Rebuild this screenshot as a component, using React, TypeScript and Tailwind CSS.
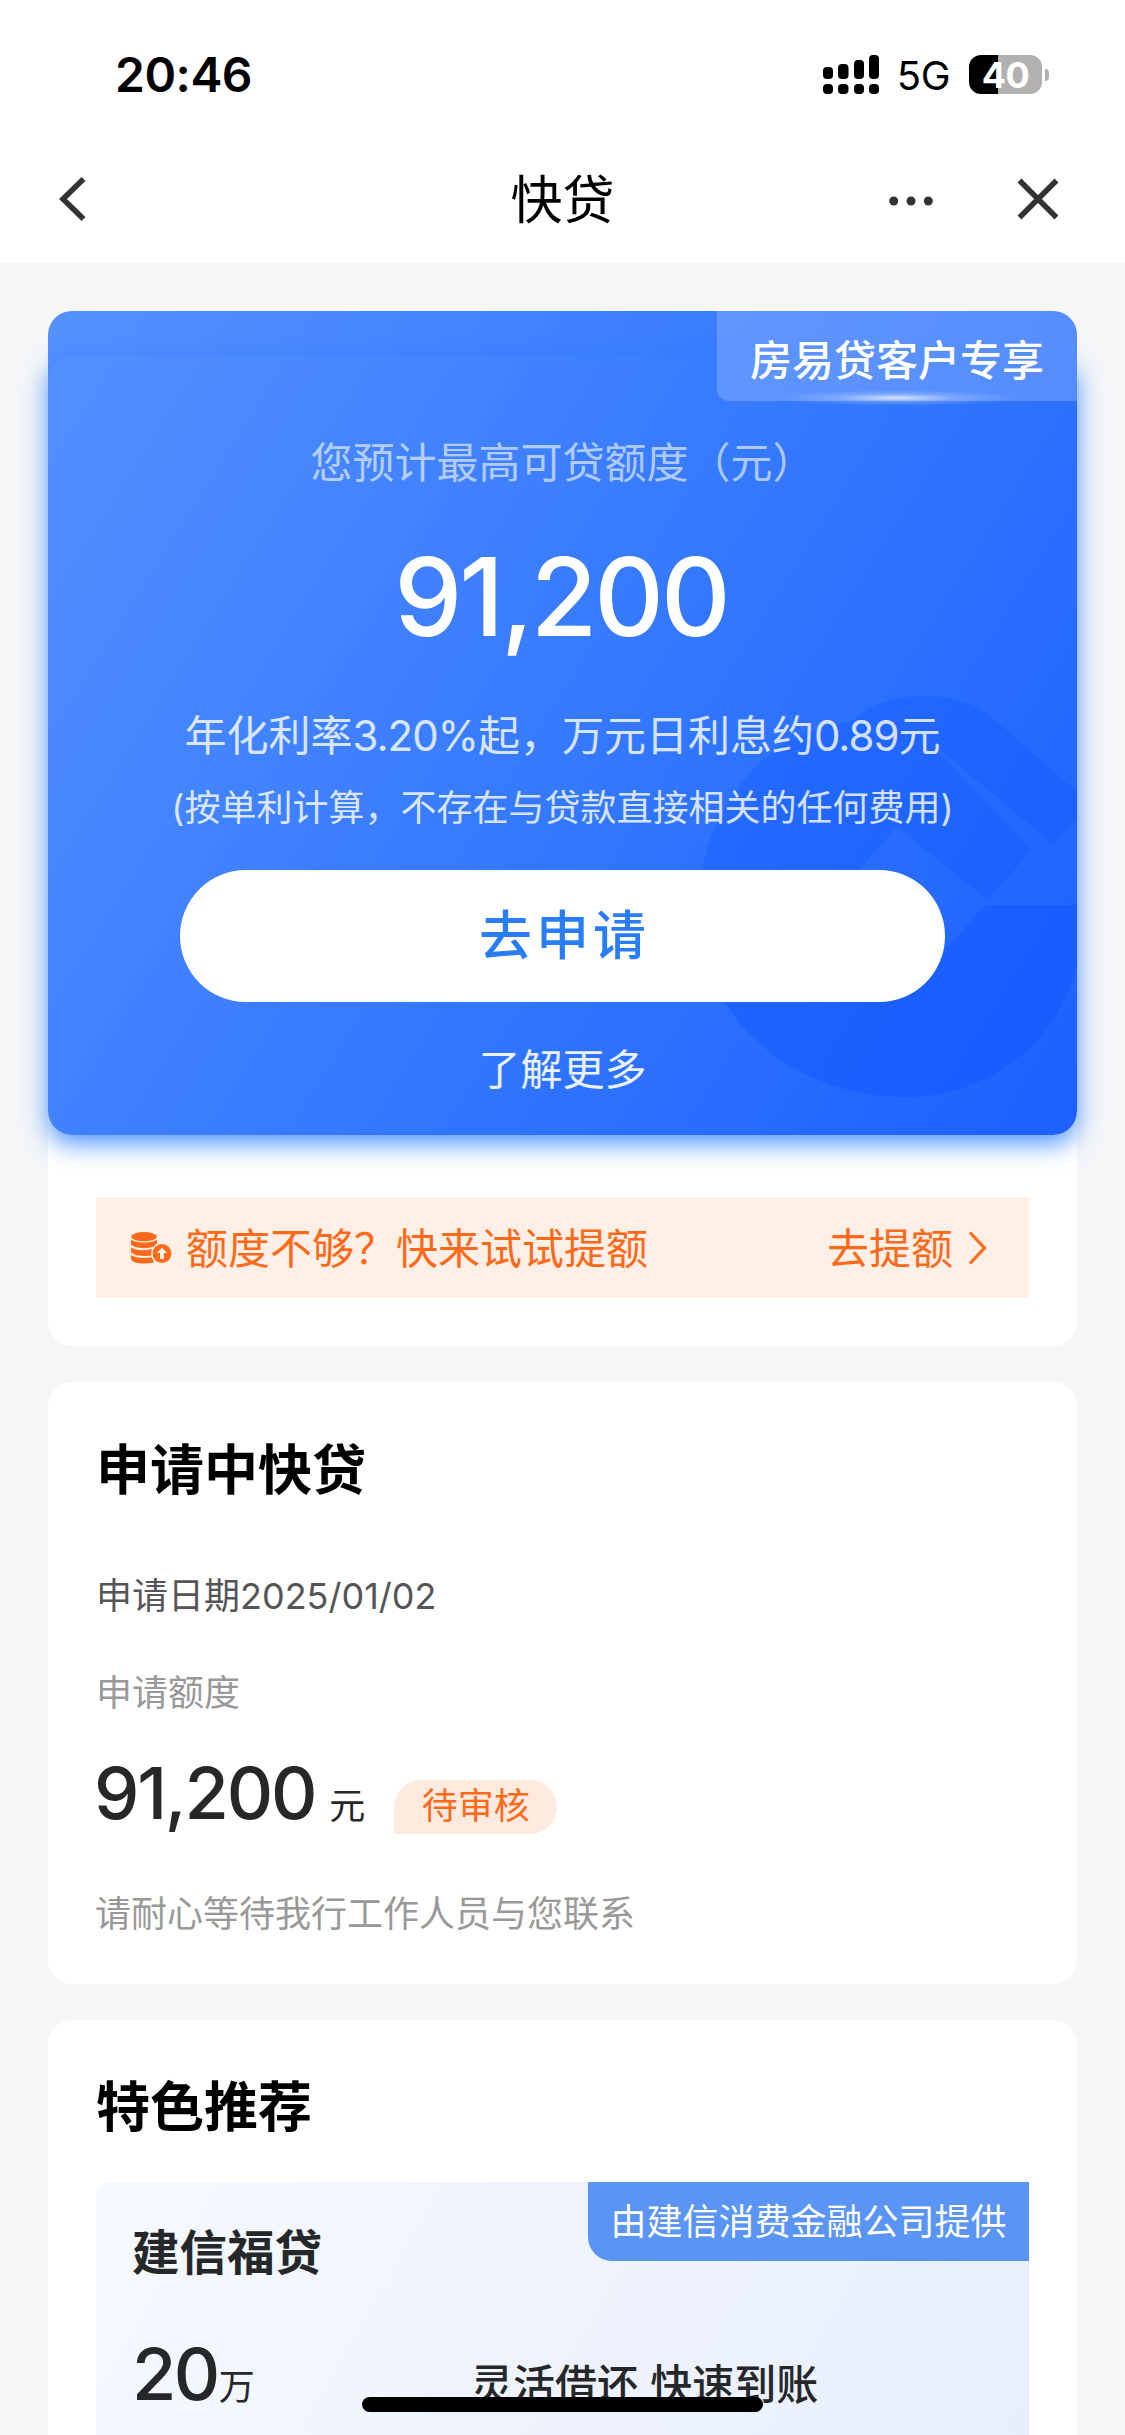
// 快贷 home page: status bar, nav bar, quota hero, pending application, recommendations

const FONT = "font-['Inter','Noto_Sans_CJK_SC',sans-serif]";

function SignalIcon() {
  return (
    <svg width="57" height="40" viewBox="0 0 57 40" className="shrink-0">
      <rect x="0" y="12" width="10" height="12" rx="4" />
      <rect x="15" y="9" width="10.5" height="15" rx="4" />
      <rect x="31" y="5" width="10" height="19" rx="4" />
      <rect x="46" y="0" width="10" height="24" rx="4" />
      <rect x="0" y="29" width="10" height="10" rx="4" />
      <rect x="15" y="29" width="10.5" height="10" rx="4" />
      <rect x="31" y="29" width="10" height="10" rx="4" />
      <rect x="46" y="29" width="10" height="10" rx="4" />
    </svg>
  );
}

function Battery() {
  return (
    <div className="flex items-center gap-[3px]">
      <div className="flex h-[39px] w-[73px] items-center justify-center rounded-[12px] bg-[linear-gradient(90deg,#000_40%,#b1b1b1_40%)] text-[36px] leading-none font-bold tracking-[-0.5px] text-white">
        40
      </div>
      <div className="h-3 w-1 rounded-r-full bg-[#b1b1b1]" />
    </div>
  );
}

function StatusBar() {
  return (
    <div className="flex h-[136px] items-start justify-between pr-[76px] pl-[115px]">
      <div className="mt-[46px] text-[48px] leading-[58px] font-semibold tracking-[-0.5px]">20:46</div>
      <div className="mt-[55px] flex h-[39px] items-center">
        <SignalIcon />
        <span className="mt-[2px] ml-[17px] text-[40px] leading-none tracking-[-0.5px]">5G</span>
        <span className="ml-[19px]">
          <Battery />
        </span>
      </div>
    </div>
  );
}

function NavBar() {
  return (
    <div className="grid h-[127px] grid-cols-[1fr_auto_1fr] items-start">
      <svg
        width="30"
        height="46"
        viewBox="0 0 30 46"
        fill="none"
        stroke="#333"
        strokeWidth="5.5"
        className="mt-[40px] ml-[57px]"
      >
        <path d="M26.5 3 L6 23 L26.5 43" />
      </svg>
      <h1 className="mt-[33px] text-[52px] leading-[64px]">快贷</h1>
      <div className="mt-[42px] mr-[66px] flex items-center justify-end">
        <svg width="44" height="10" viewBox="0 0 44 10" fill="#333" className="mt-[3px] mr-[84px]">
          <circle cx="4.7" cy="5" r="4.5" />
          <circle cx="22" cy="5" r="4.5" />
          <circle cx="39.3" cy="5" r="4.5" />
        </svg>
        <svg width="42" height="42" viewBox="0 0 42 42" fill="none" stroke="#333" strokeWidth="5.5">
          <path d="M2.5 2.5 L39.5 39.5 M39.5 2.5 L2.5 39.5" />
        </svg>
      </div>
    </div>
  );
}

// Faint bank emblem in the lower right of the hero
function Watermark() {
  return (
    <svg width="380" height="406" viewBox="697 694 380 406" className="absolute top-[383px] right-0">
      <g fill="#0850ff">
        <path
          d="M870 708 C905 690 955 692 988 714 L1077 792 V818 L1053 844 L950 758 C925 735 890 722 850 722 Z"
          opacity="0.26"
        />
        <path
          d="M850 722 C890 722 925 735 940 754 L1032 850 L987 900 L897 826 L812 925 H700 C688 840 750 730 850 722 Z"
          opacity="0.26"
        />
        <path
          d="M985 905 H1077 V960 C1062 1040 990 1097 905 1097 C825 1097 755 1055 724 1000 H900 Z"
          opacity="0.34"
        />
      </g>
    </svg>
  );
}

function CoinsIcon() {
  return (
    <svg width="41" height="32" viewBox="0 0 41 32" fill="#ff6a1a" className="shrink-0">
      <ellipse cx="13" cy="4.7" rx="12.8" ry="4.6" />
      <path d="M0 7.5 C4 11.5 22 11.5 26 7.5 V12 C25 17.5 1 17.5 0 12 Z" />
      <path d="M0 15.2 C4 18.8 18 19.3 24 15.8 L21 23.5 C12 24.5 1 24 0 19.5 Z" />
      <path d="M0 22.8 C4 26.3 14 26.8 21 25.3 L23 30.5 C12 32.5 1 31.5 0 27 Z" />
      <circle cx="31" cy="21.5" r="10.8" fill="#fff0e7" />
      <circle cx="31" cy="21.5" r="9.4" />
      <path d="M31 15.5 L36 21 H33 V27 H29 V21 H26 Z" fill="#fff0e7" />
    </svg>
  );
}

function QuotaCard() {
  return (
    <section className="relative rounded-3xl bg-white">
      <div className="absolute inset-x-0 top-[44px] h-[780px] rounded-3xl shadow-[0_9px_24px_rgba(36,124,255,0.8)]" />
      <div className="relative h-[824px] overflow-hidden rounded-3xl bg-[linear-gradient(122deg,#5590ff_0%,#4384ff_28%,#3176ff_58%,#1c60ff_100%)]">
        <div className="absolute inset-x-0 top-[45px] bottom-0 rounded-t-3xl shadow-[0_-3px_12px_rgba(45,120,255,0.25)]" />
        <Watermark />
        <div className="relative flex flex-col items-center text-white">
          <div className="relative flex h-[90px] w-[360px] justify-center self-end rounded-bl-[12px] bg-white/20 text-[42px] leading-[99px] font-medium">
            房易贷客户专享
            <span className="absolute -bottom-[5px] left-[60px] h-[16px] w-[240px] bg-[radial-gradient(closest-side,rgba(255,255,255,0.75),rgba(255,255,255,0.2)_50%,transparent)]" />
          </div>
          <p className="mt-[32px] text-[42px] leading-[60px] text-white/60">您预计最高可贷额度（元）</p>
          <p className="mt-[44px] mr-[3px] text-[108px] leading-[120px] font-medium tracking-[-3px]">91,200</p>
          <p className="mt-[49px] text-[42px] leading-[60px] text-white/80">
            年化利率<span className="tracking-[-1px]">3.20%</span>起，万元日利息约
            <span className="tracking-[-1px]">0.89</span>元
          </p>
          <p className="mt-[17px] text-[36px] leading-[50px] text-white/80">
            (按单利计算，不存在与贷款直接相关的任何费用)
          </p>
          <button className="mt-[37px] h-[132px] w-[765px] rounded-full bg-white pl-[4px] text-[53px] leading-none font-medium tracking-[4px] text-[#2a7df8]">
            去申请
          </button>
          <a className="mt-[38px] text-[42px] leading-[60px] text-white/90">了解更多</a>
        </div>
      </div>
      <div className="px-12 pt-[62px] pb-12">
        <div className="flex h-[101px] items-center bg-[#fff0e7] pr-[41px] pl-[35px] text-[42px] text-[#ff6a1a]">
          <CoinsIcon />
          <span className="mt-[2px] ml-[14px] flex-1">额度不够？快来试试提额</span>
          <span className="mt-[2px]">去提额</span>
          <svg
            width="20"
            height="34"
            viewBox="0 0 20 34"
            fill="none"
            stroke="#ff6a1a"
            strokeWidth="3.2"
            className="ml-[15px]"
          >
            <path d="M2 1.5 L16.5 17 L2 32.5" />
          </svg>
        </div>
      </div>
    </section>
  );
}

function PendingCard() {
  return (
    <section className="h-[602px] rounded-3xl bg-white px-12 pt-[50px]">
      <h2 className="text-[54px] leading-[78px] font-bold">申请中快贷</h2>
      <p className="mt-[60px] text-[36px] leading-[52px] text-[#555558]">申请日期2025/01/02</p>
      <p className="mt-[45px] text-[36px] leading-[52px] text-[#999]">申请额度</p>
      <div className="mt-[29px] flex h-[90px] items-baseline">
        <span className="-ml-[2px] text-[72px] leading-[90px] font-medium tracking-[-2.2px] text-[#262729]">
          91,200
        </span>
        <span className="ml-[14px] text-[36px] text-[#262729]">元</span>
        <span className="ml-[29px] h-[54px] w-[163px] rounded-[27px] rounded-bl-[3px] bg-[#ffeae0] text-center text-[36px] leading-[52px] text-[#ff6a1a]">
          待审核
        </span>
      </div>
      <p className="mt-[50px] -ml-[1px] text-[36px] leading-[52px] text-[#999]">请耐心等待我行工作人员与您联系</p>
    </section>
  );
}

function RecommendCard() {
  return (
    <section className="h-[520px] rounded-3xl bg-white px-12 pt-[49px]">
      <h2 className="text-[54px] leading-[78px] font-bold">特色推荐</h2>
      <div className="mt-[35px] h-[360px] rounded-xl rounded-tr-none bg-[linear-gradient(120deg,#f6f9ff_0%,#eef3fe_50%,#e6eefd_100%)]">
        <div className="flex items-start justify-between">
          <h3 className="mt-[36px] ml-[36px] text-[47.5px] leading-[70px] font-bold text-[#262729]">建信福贷</h3>
          <span className="h-[79px] w-[441px] rounded-bl-[24px] bg-[#5a94f4] text-center text-[36px] leading-[80px] text-white">
            由建信消费金融公司提供
          </span>
        </div>
        <div className="mt-[41px] flex items-baseline text-[#262729]">
          <div className="w-[375px] pl-[36px]">
            <span className="text-[72px] leading-[90px] font-medium tracking-[-2.5px]">20</span>
            <span className="ml-[1px] text-[36px]">万</span>
          </div>
          <span className="text-[42px] font-medium">灵活借还 快速到账</span>
        </div>
      </div>
    </section>
  );
}

export default function App() {
  return (
    <div className={`relative h-[2435px] w-[1125px] overflow-hidden bg-[#f4f6f8] text-black ${FONT}`}>
      <header className="bg-white">
        <StatusBar />
        <NavBar />
      </header>
      <main className="flex flex-col gap-9 px-12 pt-12">
        <QuotaCard />
        <PendingCard />
        <RecommendCard />
      </main>
      {/* home indicator */}
      <div className="absolute bottom-[23px] left-[362px] h-[15px] w-[401px] rounded-full bg-black" />
    </div>
  );
}
